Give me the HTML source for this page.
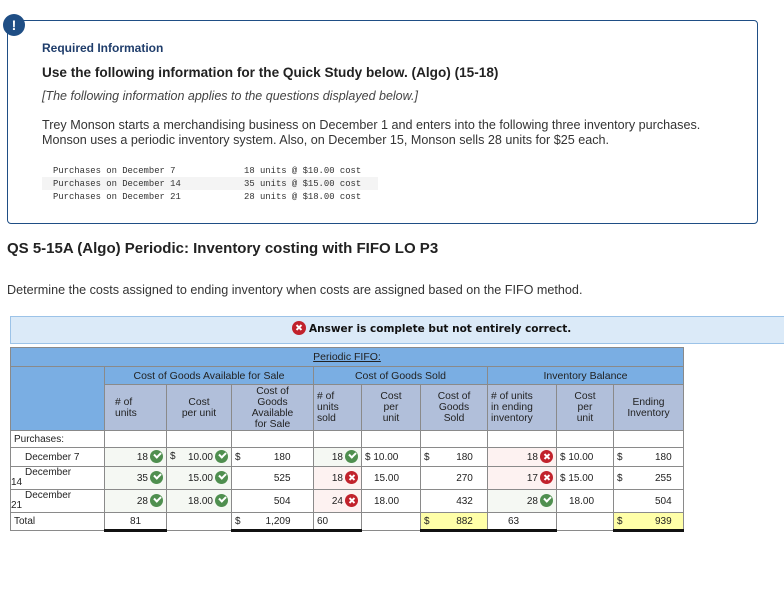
<!DOCTYPE html>
<html><head><meta charset="utf-8"><style>
body{margin:0;width:784px;height:591px;background:#fff;font-family:"Liberation Sans",sans-serif;color:#222;position:relative;overflow:hidden}
.a{position:absolute;white-space:nowrap}
.box{position:absolute;left:7px;top:20px;width:749px;height:202px;border:1.5px solid #1f4e85;border-radius:4px}
.ic{position:absolute;left:3px;top:13px;width:22px;height:22px;border-radius:50%;background:#1f4e85;color:#fff;font-weight:bold;font-size:14px;text-align:center;line-height:22px}
.mono{font-family:"Liberation Mono",monospace;font-size:8.9px;color:#333}
table{position:absolute;left:10px;top:347px;border-collapse:collapse;table-layout:fixed;font-size:10px}
td{border:1px solid #8a8a8a;padding:0 3px;overflow:hidden;white-space:nowrap}
.h1{background:#7aaee3;text-align:center;color:#222;font-size:10.5px}
.h2{background:#b1bfda;text-align:center;line-height:11px;white-space:normal;font-size:10.3px}
.r{text-align:right}
.ok{background:#f5f8f3}.bad{background:#fdf2f1}
.y{background:#ffffa8}
.ck,.x{display:inline-block;width:13px;height:13px;border-radius:50%;vertical-align:middle;margin-left:2px;position:relative;top:-1px}
.ck{background:#4f8f4f}.x{background:#c1222c}
.ck:after{content:"";position:absolute;left:3.5px;top:2.5px;width:5px;height:3px;border-left:2px solid #fff;border-bottom:2px solid #fff;transform:rotate(-45deg)}
.x:before,.x:after{content:"";position:absolute;left:6px;top:3px;width:2px;height:7px;background:#fff;transform:rotate(45deg)}
.x:after{transform:rotate(-45deg)}
.tb{border-bottom:3px solid #111}
.d{float:left}
</style></head><body>
<div class="box"></div>
<div class="ic" style="left:3px;top:14px">!</div>
<div class="a" style="left:42px;top:41px;font-size:12px;font-weight:bold;color:#1f3d6b">Required Information</div>
<div class="a" style="left:42px;top:65px;font-size:13.6px;font-weight:bold;color:#222">Use the following information for the Quick Study below. (Algo) (15-18)</div>
<div class="a" style="left:42px;top:89px;font-size:12.5px;font-style:italic;color:#444">[The following information applies to the questions displayed below.]</div>
<div class="a" style="left:42px;top:118px;font-size:12.6px;line-height:15px;color:#333">Trey Monson starts a merchandising business on December 1 and enters into the following three inventory purchases.<br>Monson uses a periodic inventory system. Also, on December 15, Monson sells 28 units for $25 each.</div>
<div class="a" style="left:42px;top:177px;width:336px;height:13px;background:#f4f4f4"></div>
<div class="a mono" style="left:53px;top:165px;line-height:13px">Purchases on December 7<br>Purchases on December 14<br>Purchases on December 21</div>
<div class="a mono" style="left:244px;top:165px;line-height:13px">18 units @ $10.00 cost<br>35 units @ $15.00 cost<br>28 units @ $18.00 cost</div>
<div class="a" style="left:7px;top:240px;font-size:15px;font-weight:bold;color:#222">QS 5-15A (Algo) Periodic: Inventory costing with FIFO LO P3</div>
<div class="a" style="left:7px;top:283px;font-size:12.6px;color:#333">Determine the costs assigned to ending inventory when costs are assigned based on the FIFO method.</div>
<div class="a" style="left:10px;top:316px;width:774px;height:26px;background:#dbeaf8;border:1px solid #9cc3e8;border-right:none"></div>
<div class="a" style="left:292px;top:322px;font-size:10.5px;font-weight:bold;font-family:'DejaVu Sans',sans-serif;color:#111"><span class="x" style="width:14px;height:14px;margin:0 3px 0 0"></span>Answer is complete but not entirely correct.</div>
<table>
<colgroup><col style="width:94px"><col style="width:62px"><col style="width:65px"><col style="width:82px"><col style="width:48px"><col style="width:59px"><col style="width:67px"><col style="width:69px"><col style="width:57px"><col style="width:70px"></colgroup>
<tr style="height:19px"><td class="h1" colspan="10" style="text-decoration:underline">Periodic FIFO:</td></tr>
<tr style="height:18px"><td class="h1" rowspan="2" style="border-bottom-color:#888"></td><td class="h1" colspan="3">Cost of Goods Available for Sale</td><td class="h1" colspan="3">Cost of Goods Sold</td><td class="h1" colspan="3">Inventory Balance</td></tr>
<tr style="height:46px"><td class="h2" style="text-align:left;padding-left:10px"># of<br>units</td><td class="h2">Cost<br>per unit</td><td class="h2">Cost of<br>Goods<br>Available<br>for Sale</td><td class="h2" style="text-align:left"># of<br>units<br>sold</td><td class="h2">Cost<br>per<br>unit</td><td class="h2">Cost of<br>Goods<br>Sold</td><td class="h2" style="text-align:left"># of units<br>in ending<br>inventory</td><td class="h2">Cost<br>per<br>unit</td><td class="h2">Ending<br>Inventory</td></tr>
<tr style="height:17px"><td>Purchases:</td><td></td><td></td><td></td><td></td><td></td><td></td><td></td><td></td><td></td></tr>
<tr style="height:19px"><td style="padding-left:14px">December 7</td><td class="r ok">18<span class="ck"></span></td><td class="r ok"><span class="d">$</span>10.00<span class="ck"></span></td><td class="r"><span class="d">$</span>180&nbsp;&nbsp;&nbsp;&nbsp;&nbsp;&nbsp;&nbsp;</td><td class="r ok">18<span class="ck"></span></td><td><span>$</span> 10.00</td><td class="r"><span class="d">$</span>180&nbsp;&nbsp;&nbsp;&nbsp;</td><td class="r bad">18<span class="x"></span></td><td>$ 10.00</td><td class="r"><span class="d">$</span>180&nbsp;&nbsp;&nbsp;</td></tr>
<tr style="height:23px"><td style="line-height:10px;padding-left:0;white-space:normal"><div style="padding-left:14px">December</div>14</td><td class="r ok">35<span class="ck"></span></td><td class="r ok">15.00<span class="ck"></span></td><td class="r">525&nbsp;&nbsp;&nbsp;&nbsp;&nbsp;&nbsp;&nbsp;</td><td class="r bad">18<span class="x"></span></td><td style="padding-left:12px">15.00</td><td class="r">270&nbsp;&nbsp;&nbsp;&nbsp;</td><td class="r bad">17<span class="x"></span></td><td>$ 15.00</td><td class="r"><span class="d">$</span>255&nbsp;&nbsp;&nbsp;</td></tr>
<tr style="height:23px"><td style="line-height:10px;padding-left:0;white-space:normal"><div style="padding-left:14px">December</div>21</td><td class="r ok">28<span class="ck"></span></td><td class="r ok">18.00<span class="ck"></span></td><td class="r">504&nbsp;&nbsp;&nbsp;&nbsp;&nbsp;&nbsp;&nbsp;</td><td class="r bad">24<span class="x"></span></td><td style="padding-left:12px">18.00</td><td class="r">432&nbsp;&nbsp;&nbsp;&nbsp;</td><td class="r ok">28<span class="ck"></span></td><td style="padding-left:12px">18.00</td><td class="r">504&nbsp;&nbsp;&nbsp;</td></tr>
<tr style="height:18px"><td>Total</td><td class="tb" style="text-align:center">81</td><td></td><td class="r tb"><span class="d">$</span>1,209&nbsp;&nbsp;&nbsp;&nbsp;&nbsp;&nbsp;&nbsp;</td><td class="tb">60</td><td></td><td class="r tb y"><span class="d">$</span>882&nbsp;&nbsp;&nbsp;&nbsp;</td><td class="tb" style="text-align:center;padding-right:20px">63</td><td></td><td class="r tb y"><span class="d">$</span>939&nbsp;&nbsp;&nbsp;</td></tr>
</table>
</body></html>
